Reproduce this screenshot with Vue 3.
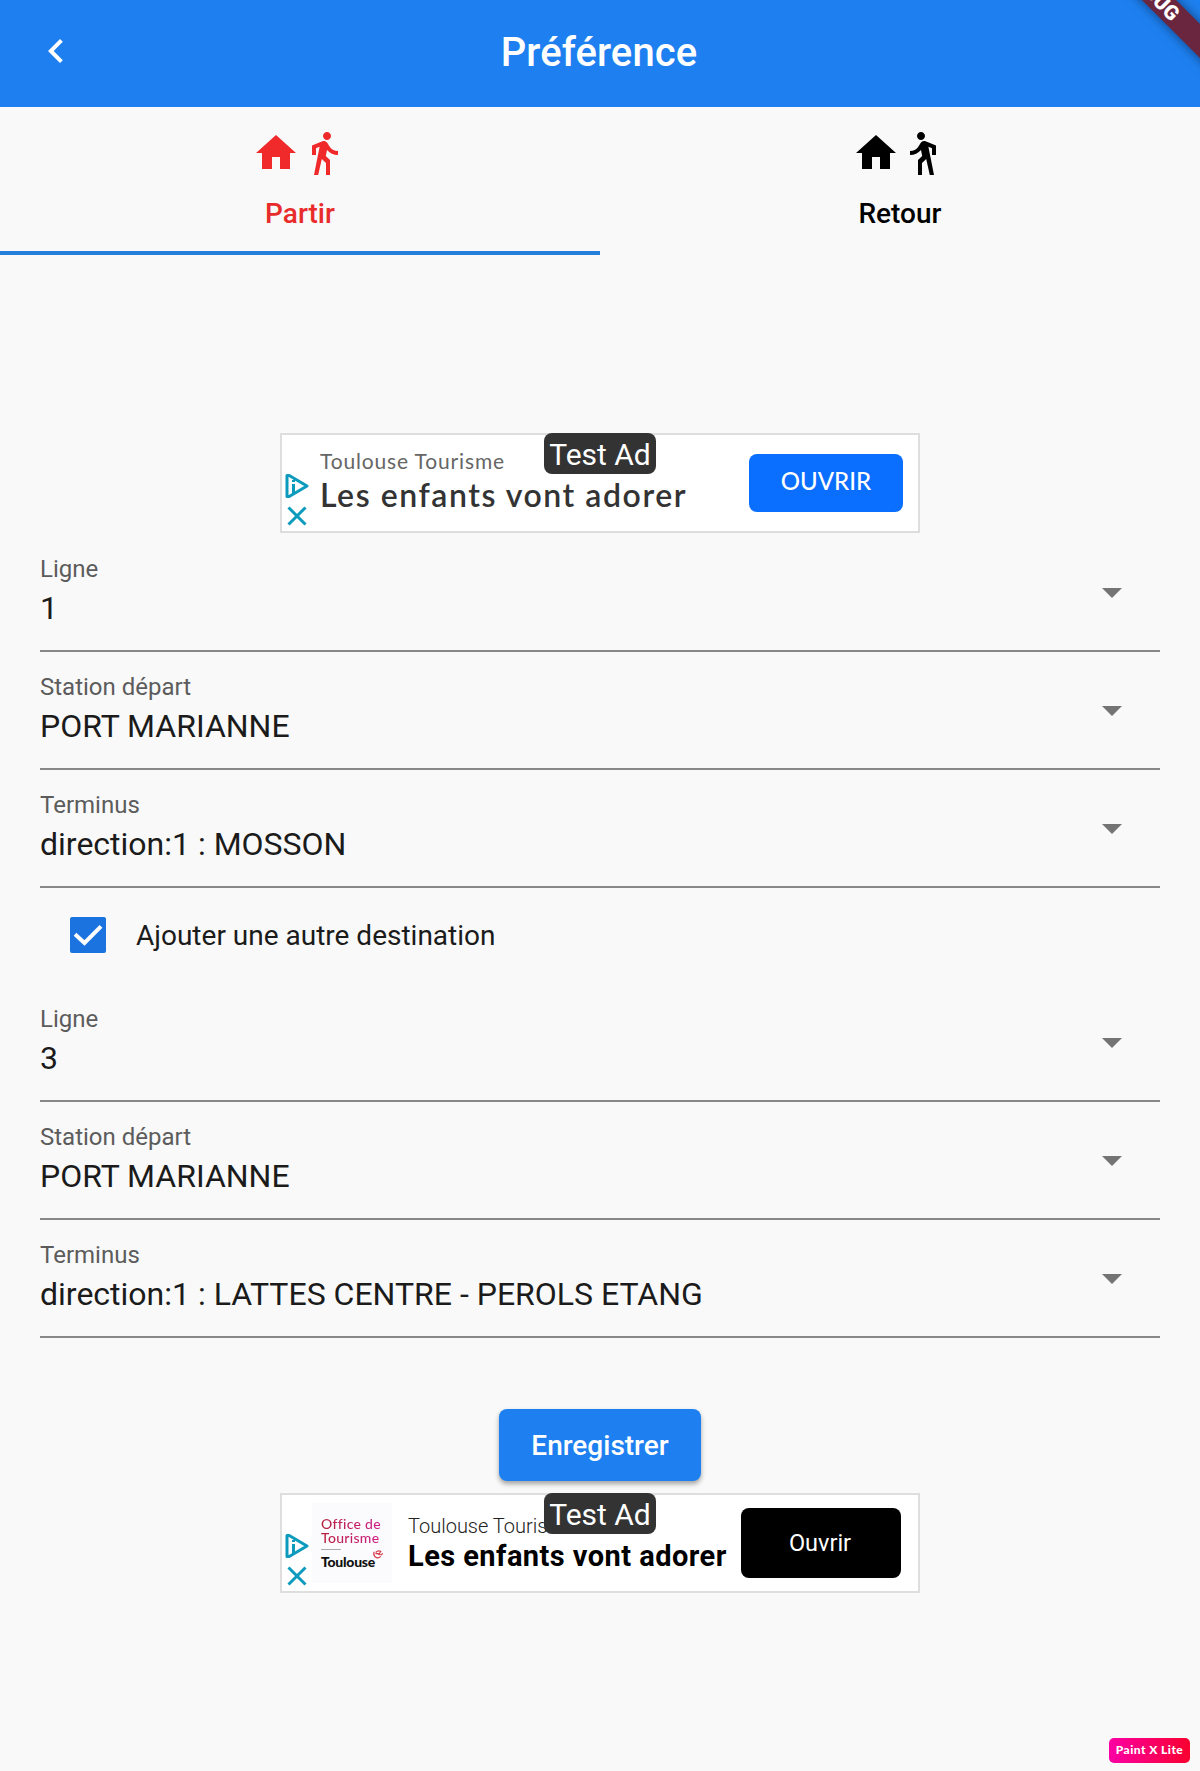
<script setup>
const paths = {
  home: 'M10 20v-6h4v6h5v-8h3L12 3 2 12h3v8z',
  walk: 'M13.5 5.5c1.1 0 2-.9 2-2s-.9-2-2-2-2 .9-2 2 .9 2 2 2zM9.8 8.9L7 23h2.1l1.8-8 2.1 2v6h2v-7.5l-2.1-2 .6-3C14.8 12 16.8 13 19 13v-2c-1.9 0-3.5-1-4.3-2.4l-1-1.6c-.4-.6-1-1-1.7-1-.3 0-.5.1-.8.1L6 8.3V13h2V9.6l1.8-.7',
}
const tabs = [
  { label: 'Partir', active: true },
  { label: 'Retour', active: false },
]
const first = [
  { label: 'Ligne', value: '1' },
  { label: 'Station départ', value: 'PORT MARIANNE' },
  { label: 'Terminus', value: 'direction:1 : MOSSON' },
]
const second = [
  { label: 'Ligne', value: '3' },
  { label: 'Station départ', value: 'PORT MARIANNE' },
  { label: 'Terminus', value: 'direction:1 : LATTES CENTRE - PEROLS ETANG' },
]
</script>

<template>
  <div class="screen">
    <header class="bar">
      <svg class="back" viewBox="0 0 24 24"><path d="M15.41 7.41L14 6l-6 6 6 6 1.41-1.41L10.83 12z" /></svg>
      <h1>Préférence</h1>
      <div class="ribbon"><span>DEBUG</span></div>
    </header>

    <nav class="tabs">
      <div v-for="tab in tabs" :key="tab.label" class="tab" :class="{ active: tab.active }">
        <div class="icons">
          <svg viewBox="0 0 24 24"><path :d="paths.home" /></svg>
          <svg viewBox="0 0 24 24" :class="{ flip: !tab.active }"><path :d="paths.walk" /></svg>
        </div>
        <span class="tab-label">{{ tab.label }}</span>
      </div>
    </nav>

    <section class="ad ad-one">
      <span class="test">Test Ad</span>
      <div class="choices">
        <svg class="info" viewBox="0 0 24 26"><path d="M2 2.5v21h2.200L22 13 4.200 2.500z" /><path d="M8.500 11v9.500M8.500 7v2" /></svg>
        <svg class="close" viewBox="0 0 20 20"><path d="M1.500 1.500l17 17M18.500 1.500l-17 17" /></svg>
      </div>
      <div class="copy">
        <span class="brand">Toulouse Tourisme</span>
        <span class="headline">Les enfants vont adorer</span>
      </div>
      <div class="cta"><span>OUVRIR</span></div>
    </section>

    <section class="group">
      <div v-for="f in first" :key="f.label" class="field">
        <div>
          <div class="label">{{ f.label }}</div>
          <div class="value">{{ f.value }}</div>
        </div>
        <svg class="caret" viewBox="0 0 24 24"><path d="M7 10l5 5 5-5z" /></svg>
      </div>
    </section>

    <div class="check-row">
      <div class="check"><svg viewBox="0 0 36 36"><path d="M5 17.200l9.500 8.800L31 9.300" /></svg></div>
      <span>Ajouter une autre destination</span>
    </div>

    <section class="group">
      <div v-for="f in second" :key="f.label" class="field">
        <div>
          <div class="label">{{ f.label }}</div>
          <div class="value">{{ f.value }}</div>
        </div>
        <svg class="caret" viewBox="0 0 24 24"><path d="M7 10l5 5 5-5z" /></svg>
      </div>
    </section>

    <button class="save">Enregistrer</button>

    <section class="ad ad-two">
      <span class="test">Test Ad</span>
      <div class="choices">
        <svg class="info" viewBox="0 0 24 26"><path d="M2 2.5v21h2.200L22 13 4.200 2.500z" /><path d="M8.500 11v9.500M8.500 7v2" /></svg>
        <svg class="close" viewBox="0 0 20 20"><path d="M1.500 1.500l17 17M18.500 1.500l-17 17" /></svg>
      </div>
      <div class="logo">
        <span class="office">Office de</span>
        <span class="office">Tourisme</span>
        <i class="rule"></i>
        <span class="city">Toulouse</span>
        <svg class="cross" viewBox="0 0 12 12"><path d="M3.500 3.800Q6 1 9 2.500L7 6Q11 7 10.800 4.500M7 5H3.200M1.800 3Q.5 6 2.800 8.500Q6 11 9 8" /></svg>
      </div>
      <div class="copy">
        <span class="brand">Toulouse Tourisme</span>
        <span class="headline">Les enfants vont adorer</span>
      </div>
      <div class="cta"><span>Ouvrir</span></div>
    </section>

    <footer class="foot"><span class="mark">Paint X Lite</span></footer>
  </div>
</template>

<style>
body { margin: 0; background: #f9f9f9; }
</style>

<style scoped>
* { box-sizing: border-box; }
.screen {
  width: 1200px;
  height: 1771px;
  display: flex;
  flex-direction: column;
  align-items: center;
  overflow: hidden;
  background: #f9f9f9;
  color: #1b1b1b;
  font-family: Roboto, sans-serif;
  white-space: nowrap;
}
.bar {
  position: relative;
  display: flex;
  align-items: center;
  justify-content: space-between;
  width: 100%;
  height: 107px;
  padding: 0 82px 5px 32px;
  background: #1e80f0;
  overflow: hidden;
}
.bar::after { content: ''; width: 0; }
.back { width: 48px; height: 48px; fill: #fff; }
h1 {
  margin: 4px 0 0;
  color: #fff;
  font-size: 40px;
  font-weight: 500;
  line-height: 48px;
  letter-spacing: 0.1px;
}
.ribbon {
  position: absolute;
  left: 1053px;
  top: -18px;
  width: 200px;
  height: 24px;
  display: flex;
  justify-content: center;
  align-items: center;
  background: #6b263f;
  box-shadow: 0 0 12px rgba(0, 0, 0, 0.5);
  color: #fff;
  font-size: 20.4px;
  font-weight: 900;
  line-height: 24px;
  transform: rotate(45deg);
}
.tabs { display: flex; width: 100%; height: 148px; }
.tab {
  flex: 1;
  display: flex;
  flex-direction: column;
  align-items: center;
  padding-top: 22px;
  border-bottom: 4px solid transparent;
  color: #000;
}
.tab.active { color: #e82c2c; border-color: #2480dc; }
.icons { display: flex; }
.icons svg { width: 48px; height: 48px; fill: currentColor; }
.active .icons svg { fill: #f02a2a; }
.flip { transform: scaleX(-1); }
.tab-label { margin-top: 20px; font-size: 28px; line-height: 33px; font-weight: 500; }

.ad {
  position: relative;
  display: flex;
  width: 640px;
  height: 100px;
  border: 2px solid #dedede;
  background: #fff;
}
.ad-one { margin-top: 178px; margin-bottom: 1px; }
.ad-two { margin-top: 12px; }
.test {
  position: absolute;
  z-index: 1;
  left: 262px;
  top: -2px;
  width: 112px;
  height: 41px;
  border-radius: 8px;
  background: #333;
  color: #fff;
  font-size: 30px;
  line-height: 44px;
  text-align: center;
}
.choices { display: flex; flex-direction: column; width: 28px; padding: 38px 0 0 3px; }
.choices svg { fill: none; stroke: #0d9bbd; stroke-width: 3; flex: none; }
.info { width: 24px; height: 26px; stroke-linejoin: round; }
.close { width: 20px; height: 20px; margin: 7px 0 0 2px; }
.copy { display: flex; flex-direction: column; }
.ad-one .copy { width: 439px; padding: 12px 0 0 10px; font-family: Lato, sans-serif; }
.ad-one .brand { font-size: 21px; line-height: 28px; color: #666; letter-spacing: 0.85px; }
.ad-one .headline { font-size: 32px; line-height: 40px; font-weight: 600; color: #333; letter-spacing: 1.55px; }
.cta { display: flex; align-items: center; justify-content: center; color: #fff; }
.ad-one .cta {
  width: 154px;
  height: 58px;
  margin-top: 19px;
  padding-bottom: 5px;
  border-radius: 8px;
  background: #0a6eff;
  font: 500 24px/30px Lato, sans-serif;
}
.logo {
  position: relative;
  display: flex;
  flex-direction: column;
  width: 80px;
  height: 80px;
  margin: 8px 0 0 2px;
  padding: 14px 0 0 9px;
  background: #fbfbfe;
  font-family: Lato, sans-serif;
}
.office {
  font-size: 14px;
  line-height: 14px;
  width: 62px;
  font-weight: 500;
  letter-spacing: 0.3px;
  background: linear-gradient(90deg, #b51f3c, #d0208a);
  background-clip: text;
  color: transparent;
}
.rule { width: 20px; height: 1px; margin-top: 4px; background: #aaa; }
.city { margin-top: 4px; font-size: 14px; line-height: 16px; font-weight: 900; color: #111; letter-spacing: -0.25px; }
.cross { position: absolute; left: 60px; top: 46px; width: 12px; height: 11px; fill: none; stroke: #d83a4a; stroke-width: 1.3; }
.ad-two .copy { width: 349px; padding: 19px 0 0 16px; color: #000; }
.ad-two .brand { font-size: 20px; line-height: 24px; font-weight: 300; color: #222; }
.ad-two .headline { font-size: 29px; line-height: 34px; margin-top: 1px; font-weight: 700; letter-spacing: 0.45px; }
.ad-two .cta {
  width: 160px;
  height: 70px;
  margin-top: 13px;
  padding-right: 2px;
  border-radius: 8px;
  background: #000;
  font-size: 23.5px;
}

.group { width: 1120px; }
.field {
  display: flex;
  justify-content: space-between;
  height: 118px;
  padding: 21px 24px 0 0;
  border-bottom: 2px solid #888;
}
.label { font-size: 24px; line-height: 28px; color: #5c5c5c; }
.value { margin-top: 5px; font-size: 32px; line-height: 40px; }
.caret { width: 48px; height: 48px; margin-top: 13px; fill: #747474; }
.check-row {
  display: flex;
  align-items: center;
  width: 1120px;
  height: 96px;
  padding: 0 0 2px 30px;
  gap: 30px;
  font-size: 28px;
}
.check { width: 36px; height: 36px; border-radius: 2px; background: #1b73df; }
.check svg { display: block; fill: none; stroke: #fff; stroke-width: 4; }
.save {
  width: 202px;
  height: 72px;
  margin-top: 71px;
  padding: 0;
  flex: none;
  border: 0;
  border-radius: 8px;
  background: #1e80f0;
  box-shadow: 0 3px 5px rgba(0, 0, 0, 0.35);
  color: #fff;
  font: 500 28px/33px Roboto, sans-serif;
}
.foot { display: flex; justify-content: flex-end; width: 100%; margin-top: 145px; padding-right: 10px; }
.mark {
  width: 81px;
  height: 25px;
  border-radius: 5px;
  background: linear-gradient(90deg, #fb00a4, #f80030);
  color: #fff;
  font: 900 12px/24px Lato, sans-serif;
  letter-spacing: 0.45px;
  text-align: center;
}
</style>
